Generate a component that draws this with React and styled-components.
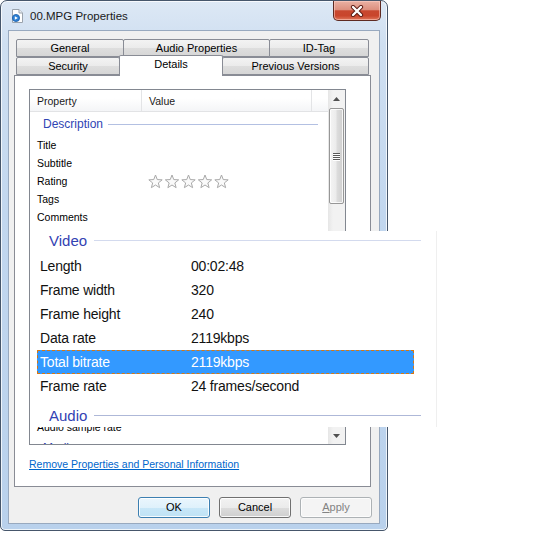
import React from "react";
import styled, { createGlobalStyle } from "styled-components";

const GlobalStyle = createGlobalStyle`
  html, body {
    margin: 0;
    padding: 0;
    background: #ffffff;
  }
  body {
    font-family: "Liberation Sans", Arial, sans-serif;
    color: #000;
  }
`;

const Page = styled.div`
  width: 549px;
  height: 551px;
  background: #fff;
  overflow: hidden;
`;

const Window = styled.div`
  position: relative;
  width: 388px;
  height: 531px;
  box-sizing: border-box;
  border: 1px solid #46566b;
  border-radius: 7px 7px 5px 5px;
  background: linear-gradient(180deg, #dde8f5 0%, #cfdff1 8%, #c2d7ef 40%, #b9d1ec 100%);
  box-shadow: inset 0 0 0 1px rgba(255, 255, 255, 0.75);
  padding: 0 7px 6px 7px;
  display: flex;
  flex-direction: column;
`;

const TitleBar = styled.div`
  height: 29px;
  flex: none;
  display: flex;
  align-items: center;
`;

const TitleIcon = styled.svg`
  margin-left: 1px;
  margin-top: 1px;
  flex: none;
`;

const TitleText = styled.span`
  margin-left: 5px;
  font-size: 11.5px;
  color: #1a1a1a;
`;

const CloseButton = styled.div`
  margin-left: auto;
  margin-right: -1px;
  align-self: flex-start;
  width: 48px;
  height: 20px;
  box-sizing: border-box;
  border: 1px solid #5e2a22;
  border-top: none;
  border-radius: 0 0 5px 5px;
  background: linear-gradient(180deg, #eab1a4 0%, #dd907f 45%, #c8472f 52%, #c9452c 78%, #e0775c 100%);
  box-shadow: inset 0 0 0 1px rgba(255, 210, 200, 0.55);
  display: flex;
  align-items: center;
  justify-content: center;
`;

const Client = styled.div`
  flex: 1;
  background: #f0f0f0;
  border: 1px solid #98a9bf;
  padding: 8px 8px 0 5px;
  display: flex;
  flex-direction: column;
`;

const TabRow = styled.div`
  display: flex;
  margin-left: 2px;
  height: 18px;
`;

const Tab = styled.div`
  position: relative;
  width: ${(p) => p.$w}px;
  height: ${(p) => (p.$active ? 21 : 18)}px;
  margin-top: ${(p) => (p.$active ? -2 : 0)}px;
  margin-left: -1px;
  &:first-child {
    margin-left: 0;
  }
  box-sizing: border-box;
  border: 1px solid #898c95;
  border-bottom: ${(p) => (p.$active ? "none" : "1px solid #898c95")};
  border-radius: 2px 2px 0 0;
  background: ${(p) =>
    p.$active ? "#ffffff" : "linear-gradient(180deg, #f3f3f3 0%, #ebebeb 50%, #dedede 51%, #d6d6d6 100%)"};
  z-index: ${(p) => (p.$active ? 2 : 1)};
  display: flex;
  align-items: center;
  justify-content: center;
  padding-bottom: ${(p) => (p.$active ? 4 : 0)}px;
  font-size: 11px;
  color: #000;
`;

const Panel = styled.div`
  height: 412px;
  box-sizing: border-box;
  border: 1px solid #898c95;
  background: #fff;
  padding: 13px 0 0 14px;
  display: flex;
  flex-direction: column;
`;

const ListView = styled.div`
  display: flex;
  width: 317px;
  height: 356px;
  box-sizing: border-box;
  border: 1px solid #828790;
  background: #fff;
  overflow: hidden;
`;

const ListMain = styled.div`
  flex: 1;
  display: flex;
  flex-direction: column;
  overflow: hidden;
`;

const ListHeader = styled.div`
  flex: none;
  display: flex;
  height: 22px;
  box-sizing: border-box;
  background: linear-gradient(180deg, #ffffff 0%, #ffffff 40%, #f4f5f7 100%);
  border-bottom: 1px solid #e2e3e5;
`;

const HeaderCell = styled.div`
  width: ${(p) => p.$w}px;
  flex: ${(p) => (p.$w ? "none" : "1")};
  box-sizing: border-box;
  padding-left: 7px;
  border-right: ${(p) => (p.$w ? "1px solid #e3e4e6" : "none")};
  display: flex;
  align-items: center;
  font-size: 10.5px;
  color: #1a1a1a;
`;

const GroupHeader = styled.div`
  flex: none;
  height: 24px;
  display: flex;
  align-items: center;
  padding-left: 13px;
  padding-right: 10px;
  visibility: ${(p) => (p.$covered ? "hidden" : "visible")};
`;

const GroupLabel = styled.span`
  font-size: 12px;
  color: #2f45b4;
`;

const GroupLine = styled.div`
  flex: 1;
  height: 1px;
  margin-left: 5px;
  background: #b3c0e2;
`;

const Row = styled.div`
  flex: none;
  height: 18px;
  display: flex;
  align-items: center;
  font-size: 10.5px;
  color: #000;
  visibility: ${(p) => (p.$covered ? "hidden" : "visible")};
`;

const PropCell = styled.div`
  width: 111px;
  box-sizing: border-box;
  padding-left: 7px;
  white-space: nowrap;
`;

const ValueCell = styled.div`
  padding-left: 7px;
  display: flex;
  align-items: center;
  white-space: nowrap;
`;

const ScrollBar = styled.div`
  width: 17px;
  flex: none;
  display: flex;
  flex-direction: column;
  background: linear-gradient(90deg, #e6e6e6 0%, #f2f2f2 30%, #f2f2f2 100%);
`;

const ScrollButton = styled.div`
  height: 17px;
  flex: none;
  display: flex;
  align-items: center;
  justify-content: center;
`;

const Thumb = styled.div`
  height: 96px;
  margin: 1px 1px 0 1px;
  box-sizing: border-box;
  border: 1px solid #979797;
  border-radius: 2px;
  background: linear-gradient(90deg, #f4f4f4 0%, #ececec 45%, #dcdcdc 55%, #cfcfcf 100%);
  box-shadow: inset 0 0 0 1px rgba(255, 255, 255, 0.8);
  display: flex;
  flex-direction: column;
  align-items: center;
  justify-content: center;
  gap: 1px;
`;

const Grip = styled.div`
  width: 7px;
  height: 1px;
  background: #5a5a5a;
  box-shadow: 0 1px 0 #ffffff;
`;

const Track = styled.div`
  flex: 1;
`;

const RemoveLink = styled.a`
  margin-top: 12px;
  font-size: 10.5px;
  line-height: 14px;
  color: #0066cc;
  text-decoration: underline;
  cursor: pointer;
  align-self: flex-start;
`;

const ButtonRow = styled.div`
  display: flex;
  justify-content: flex-end;
  gap: 9px;
  margin-top: 10px;
  margin-right: -1px;
`;

const Button = styled.div`
  width: 72px;
  height: 21px;
  box-sizing: border-box;
  border: 1px solid ${(p) => (p.$kind === "default" ? "#3c7fb1" : p.$kind === "disabled" ? "#adb2b5" : "#707070")};
  border-radius: 3px;
  background: ${(p) =>
    p.$kind === "default"
      ? "linear-gradient(180deg, #eaf6fd 0%, #dff1fb 50%, #c8e7f8 51%, #bfe2f5 100%)"
      : p.$kind === "disabled"
      ? "#f4f4f4"
      : "linear-gradient(180deg, #f2f2f2 0%, #ebebeb 50%, #dddddd 51%, #cfcfcf 100%)"};
  box-shadow: inset 0 0 0 1px ${(p) => (p.$kind === "disabled" ? "#fcfcfc" : "rgba(255,255,255,0.85)")};
  color: ${(p) => (p.$kind === "disabled" ? "#838383" : "#000")};
  font-size: 11px;
  padding-bottom: 1px;
  display: flex;
  align-items: center;
  justify-content: center;
`;

const Mnemonic = styled.span`
  text-decoration: underline;
`;

/* magnified part laid over the list */
const Zoomed = styled.div`
  position: absolute;
  left: 29px;
  top: 230px;
  width: 407px;
  height: 196px;
  box-sizing: border-box;
  background: #fff;
  border-right: 1px solid #efefef;
  display: flex;
  flex-direction: column;
`;

const BigGroup = styled.div`
  flex: none;
  height: 18px;
  padding-top: ${(p) => p.$pad}px;
  margin-bottom: ${(p) => p.$after}px;
  display: flex;
  align-items: center;
  padding-left: 19px;
  padding-right: 15px;
`;

const BigLabel = styled.span`
  font-size: 15px;
  color: #3342b3;
`;

const BigLine = styled.div`
  flex: 1;
  height: 1px;
  margin-left: 7px;
  background: ${(p) => p.$c};
`;

const BigRow = styled.div`
  flex: none;
  height: 24px;
  width: 377px;
  margin-left: 7px;
  box-sizing: border-box;
  border: 1px dashed ${(p) => (p.$selected ? "#d9770f" : "transparent")};
  background: ${(p) => (p.$selected ? "#3399ff" : "transparent")};
  color: ${(p) => (p.$selected ? "#ffffff" : "#111111")};
  display: flex;
  align-items: center;
  font-size: 14px;
  letter-spacing: -0.2px;
`;

const BigProp = styled.div`
  width: 153px;
  box-sizing: border-box;
  padding-left: 2px;
  white-space: nowrap;
`;

const BigValue = styled.div`
  white-space: nowrap;
`;

function starPoints(cx, cy, ro, ri) {
  const pts = [];
  for (let i = 0; i < 10; i++) {
    const a = ((-90 + i * 36) * Math.PI) / 180;
    const r = i % 2 === 0 ? ro : ri;
    pts.push(`${(cx + r * Math.cos(a)).toFixed(2)},${(cy + r * Math.sin(a)).toFixed(2)}`);
  }
  return pts.join(" ");
}

function Stars() {
  return (
    <svg width="84" height="15" viewBox="0 0 84 15">
      {[0, 1, 2, 3, 4].map((i) => (
        <polygon
          key={i}
          points={starPoints(7.5 + i * 16.5, 8, 7, 3)}
          fill="#fafafa"
          stroke="#a9a9a9"
          strokeWidth="1"
          strokeLinejoin="round"
        />
      ))}
    </svg>
  );
}

function FileIcon() {
  return (
    <TitleIcon width="16" height="16" viewBox="0 0 16 16">
      <path d="M3.5 1.5 H10 L13.5 5 V14.5 H3.5 Z" fill="#ffffff" stroke="#9aa3ad" />
      <path d="M10 1.5 V5 H13.5" fill="#e9edf2" stroke="#9aa3ad" />
      <circle cx="7" cy="10" r="3.6" fill="#2b7fd4" stroke="#1c5fa8" strokeWidth="0.8" />
      <path d="M5.8 8.2 L8.9 10 L5.8 11.8 Z" fill="#ffffff" />
    </TitleIcon>
  );
}

function CloseGlyph() {
  return (
    <svg width="14" height="12" viewBox="0 0 14 12">
      <path d="M3 2 L11 10 M11 2 L3 10" stroke="#5a1a12" strokeWidth="4.2" strokeLinecap="round" />
      <path d="M3 2 L11 10 M11 2 L3 10" stroke="#ffffff" strokeWidth="2.4" strokeLinecap="round" />
    </svg>
  );
}

function Arrow({ up }) {
  return (
    <svg width="7" height="4" viewBox="0 0 7 4">
      <path d={up ? "M0 4 L3.5 0 L7 4 Z" : "M0 0 L3.5 4 L7 0 Z"} fill="#505050" />
    </svg>
  );
}

const videoRows = [
  ["Length", "00:02:48"],
  ["Frame width", "320"],
  ["Frame height", "240"],
  ["Data rate", "2119kbps"],
  ["Total bitrate", "2119kbps"],
  ["Frame rate", "24 frames/second"],
];

const descRows = ["Title", "Subtitle", "Rating", "Tags", "Comments"];
const audioRows = [
  ["Bit rate", true],
  ["Channels", true],
  ["Audio sample rate", false],
];

function Group({ label, covered }) {
  return (
    <GroupHeader $covered={covered}>
      <GroupLabel>{label}</GroupLabel>
      <GroupLine />
    </GroupHeader>
  );
}

export default function App() {
  return (
    <Page>
      <GlobalStyle />
      <Window>
        <TitleBar>
          <FileIcon />
          <TitleText>00.MPG Properties</TitleText>
          <CloseButton>
            <CloseGlyph />
          </CloseButton>
        </TitleBar>

        <Client>
          <TabRow>
            <Tab $w={108}>General</Tab>
            <Tab $w={147}>Audio Properties</Tab>
            <Tab $w={100}>ID-Tag</Tab>
          </TabRow>
          <TabRow>
            <Tab $w={104}>Security</Tab>
            <Tab $w={104} $active>
              Details
            </Tab>
            <Tab $w={147}>Previous Versions</Tab>
          </TabRow>

          <Panel>
            <ListView>
              <ListMain>
                <ListHeader>
                  <HeaderCell $w={112}>Property</HeaderCell>
                  <HeaderCell $w={170}>Value</HeaderCell>
                  <HeaderCell />
                </ListHeader>
                <Group label="Description" />
                {descRows.map((name) => (
                  <Row key={name}>
                    <PropCell>{name}</PropCell>
                    <ValueCell>{name === "Rating" ? <Stars /> : null}</ValueCell>
                  </Row>
                ))}
                {/* rows below lie under the magnified view */}
                <Group label="Video" covered />
                {videoRows.map(([name, value]) => (
                  <Row key={name} $covered>
                    <PropCell>{name}</PropCell>
                    <ValueCell>{value}</ValueCell>
                  </Row>
                ))}
                <Group label="Audio" covered />
                {audioRows.map(([name, covered]) => (
                  <Row key={name} $covered={covered}>
                    <PropCell>{name}</PropCell>
                    <ValueCell />
                  </Row>
                ))}
                <Group label="Media" />
              </ListMain>
              <ScrollBar>
                <ScrollButton>
                  <Arrow up />
                </ScrollButton>
                <Thumb>
                  <Grip />
                  <Grip />
                  <Grip />
                  <Grip />
                </Thumb>
                <Track />
                <ScrollButton>
                  <Arrow />
                </ScrollButton>
              </ScrollBar>
            </ListView>
            <RemoveLink>Remove Properties and Personal Information</RemoveLink>
          </Panel>

          <ButtonRow>
            <Button $kind="default">OK</Button>
            <Button>Cancel</Button>
            <Button $kind="disabled">
              <Mnemonic>A</Mnemonic>pply
            </Button>
          </ButtonRow>
        </Client>

        <Zoomed>
          <BigGroup $pad={0} $after={5}>
            <BigLabel>Video</BigLabel>
            <BigLine $c="#d3daee" />
          </BigGroup>
          {videoRows.map(([name, value]) => (
            <BigRow key={name} $selected={name === "Total bitrate"}>
              <BigProp>{name}</BigProp>
              <BigValue>{value}</BigValue>
            </BigRow>
          ))}
          <BigGroup $pad={8} $after={0}>
            <BigLabel>Audio</BigLabel>
            <BigLine $c="#aeb8d8" />
          </BigGroup>
        </Zoomed>
      </Window>
    </Page>
  );
}
